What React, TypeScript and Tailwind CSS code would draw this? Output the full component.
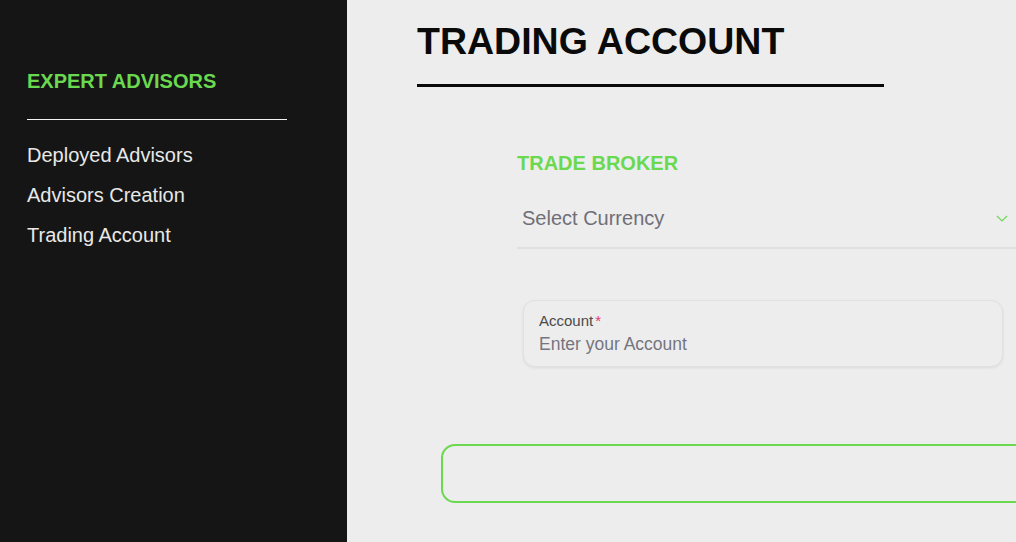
import React from "react";

export default function App() {
  return (
    <div
      className="flex h-[542px] w-[1016px] overflow-hidden bg-[#ededed]"
      style={{ fontFamily: '"Liberation Sans", Arial, sans-serif' }}
    >
      <aside className="w-[347px] shrink-0 bg-[#151515] pl-[27px] pt-[69px]">
        <h2 className="text-[20px] font-bold leading-6 text-[#6ad950]">EXPERT ADVISORS</h2>
        <div className="mt-[26px] h-px w-[260px] bg-[#f2f2f2]" />
        <nav className="mt-[15px] flex flex-col text-[20px] leading-[40px] text-[#e8e8e8]">
          <a>Deployed Advisors</a>
          <a>Advisors Creation</a>
          <a>Trading Account</a>
        </nav>
      </aside>
      <main className="flex-1 pl-[70px] pt-[19px]">
        <h1 className="text-[37.5px] font-bold leading-[44px] text-[#0a0a0a]">TRADING ACCOUNT</h1>
        <div className="mt-[21px] h-[3px] w-[467px] bg-[#0a0a0a]" />
        <div className="pl-[100px] pt-[64px]">
          <div className="w-[500px]">
            <h3 className="text-[20px] font-bold leading-6 text-[#6ad950]">TRADE BROKER</h3>
            <div className="flex items-end justify-between border-b-2 border-[#e0e0e0] pb-[17px] pl-[5px] pr-[9px] pt-[31px]">
              <span className="text-[20px] leading-6 text-[#6f6f78]">Select Currency</span>
              <svg width="12" height="7" viewBox="0 0 12 7" className="mb-[8px]" fill="none">
                <path d="M1 1l5 5 5-5" stroke="#6ad950" strokeWidth="1.2" />
              </svg>
            </div>
            <div className="ml-[6px] mt-[51px] h-[67px] w-[480px] rounded-[12px] border border-[#e1e1e1] bg-[#ededed] pl-[15px] pt-[11px] shadow-[0_1px_3px_rgba(0,0,0,0.08)]">
              <div className="text-[15px] leading-[18px] text-[#4a4a4a]">
                Account<span className="ml-[2px] text-[#e23a6b]">*</span>
              </div>
              <div className="mt-[3px] text-[17.5px] leading-[22px] text-[#75757f]">Enter your Account</div>
            </div>
          </div>
        </div>
        <div className="ml-[24px] mt-[77px] h-[59px] w-[700px] rounded-[14px] border-2 border-[#6ad950]" />
      </main>
    </div>
  );
}
